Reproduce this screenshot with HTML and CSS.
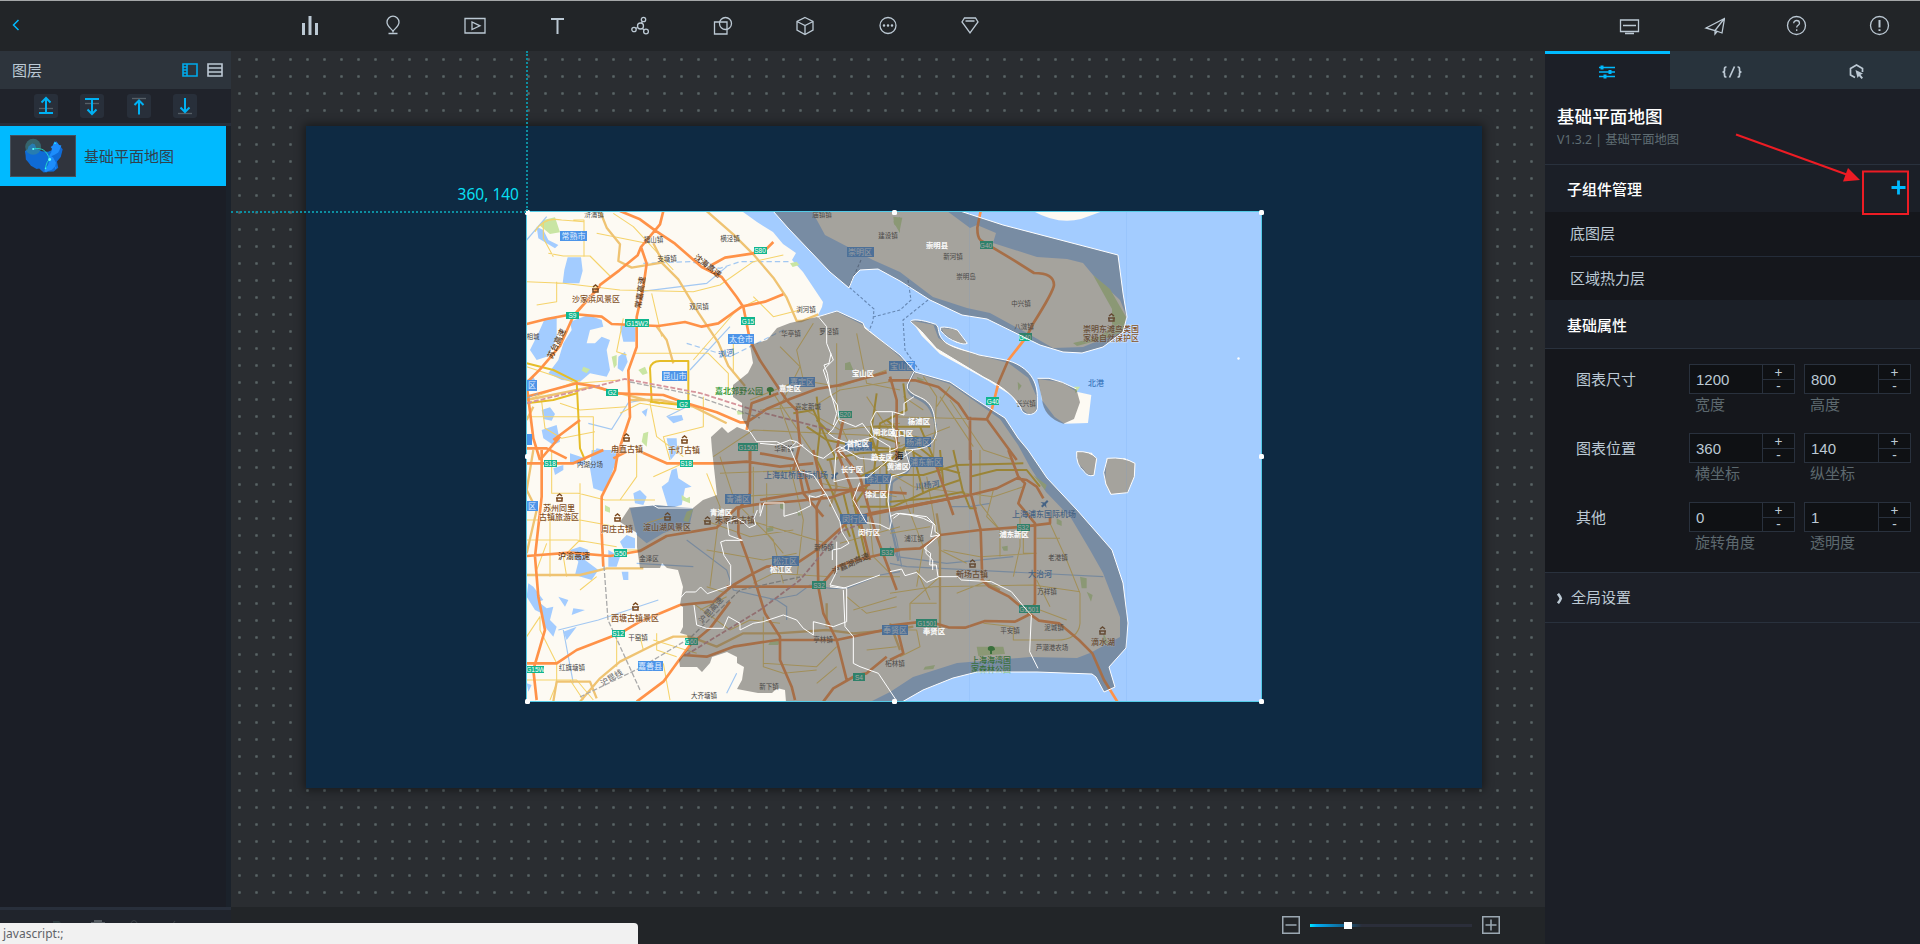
FILE: index.html
```html
<!DOCTYPE html>
<html lang="zh-CN">
<head>
<meta charset="utf-8">
<title>基础平面地图</title>
<link rel="stylesheet" href="styles.css">
</head>
<body>
<div class="app">
<header class="topbar">
  <div class="back"><svg width="8" height="12" viewBox="0 0 8 12"><path d="M6.500 1 1.500 6l5 5"/></svg></div>
  <nav class="tools">
    <span><svg viewBox="0 0 24 24"><path class="thick" d="M5.500 10v12M12 3v19M18.500 10v12"/></svg></span>
    <span><svg viewBox="0 0 24 24"><path d="M12 18.500c-1-2.500-6-5-6-9.300a6 6 0 0 1 12 0c0 4.300-5 6.800-6 9.300zM7.500 20.500h9"/></svg></span>
    <span><svg viewBox="0 0 24 24"><path d="M2 5.500h20v14.500H2zM9 9v7.500l8-3.700z"/></svg></span>
    <span><svg viewBox="0 0 24 24"><path class="thick2" d="M5 6h13M11.500 5v16"/></svg></span>
    <span><svg viewBox="0 0 24 24"><circle cx="12.500" cy="13" r="3"/><circle cx="15.500" cy="6.500" r="2.200"/><circle cx="6" cy="16.500" r="2.200"/><circle cx="18" cy="18.500" r="2.400"/><path d="m13.500 10 1-1.500M9.500 14.500l-1.500.8M14.500 15.500l1.500 1.500"/></svg></span>
    <span><svg viewBox="0 0 24 24"><path d="M3.500 9H16v12H3.500z"/><circle cx="14.500" cy="10.500" r="6"/></svg></span>
    <span><svg viewBox="0 0 24 24"><path d="m12 4.500 8 4V17l-8 4.500L4 17V8.500zM4 8.500l8 4 8-4M12 12.500v9"/></svg></span>
    <span><svg viewBox="0 0 24 24"><circle cx="12" cy="12.500" r="8"/><path class="dots" d="M8 12.500h.01M12 12.500h.01M16 12.500h.01"/></svg></span>
    <span><svg viewBox="0 0 24 24"><path d="M6.500 5h11l2.500 4-8 11L4 9zM7.500 8h9"/></svg></span>
  </nav>
  <nav class="sys">
    <span><svg viewBox="0 0 24 24"><path d="M2.500 7h18v11.500h-18zM5 12.500h13M7 20.500h9"/></svg></span>
    <span><svg viewBox="0 0 24 24"><path d="M5 15 23.500 5.500 21 20l-7-2.500zM23 6l-9 11.500V21l2.500-3"/></svg></span>
    <span><svg viewBox="0 0 24 24"><circle cx="12.500" cy="12.500" r="9"/><path d="M9.700 10.200c0-3.700 5.800-3.500 5.800 0 0 2.200-2.800 2-2.800 4.300M12.700 16.300v1.700"/></svg></span>
    <span><svg viewBox="0 0 24 24"><circle cx="12.500" cy="12.500" r="9"/><path class="thick2" d="M12.500 7v7.500M12.500 16.200v1.700"/></svg></span>
  </nav>
</header>

<div class="body">
<aside class="layers">
  <div class="lhead"><b>图层</b>
    <svg class="on" width="16" height="14" viewBox="0 0 16 14"><path d="M1 1h14v12H1zM5 1v12M1 4h4M1 7h4M1 10h4"/></svg>
    <svg width="16" height="14" viewBox="0 0 16 14"><path d="M1 1h14v12H1zM1 5h14M1 9h14"/></svg>
  </div>
  <div class="ltools">
    <i><svg viewBox="0 0 24 24"><path class="dim" d="M5 14.500h14"/><path d="M12 4.500V19M7.500 8.500 12 4l4.500 4.500M5 19h14"/></svg></i>
    <i><svg viewBox="0 0 24 24"><path class="dim" d="M5 9.500h14"/><path d="M12 5v15M7.500 15.500 12 20l4.500-4.500M5 5h14"/></svg></i>
    <i><svg viewBox="0 0 24 24"><path class="dim" d="M5 4.500h14"/><path d="M12 20.500V6M7.500 11 12 6.500l4.500 4.500"/></svg></i>
    <i><svg viewBox="0 0 24 24"><path class="dim" d="M5 19.500h14"/><path d="M12 4v14M7.500 13.500 12 18l4.500-4.500"/></svg></i>
  </div>
  <div class="llist">
    <div class="item">
      <svg class="thumb" viewBox="15 15 198 126"><path fill="#0f6bd6" d="m57 62 9-5 2-9 12-9 8 2 6 14 16 8 20 2 14-6 6-12 6-4-2-14 6 8 16 20-6 24-12 14 4 20-14 12-18 1-14 2-14-13-8 2-18-10-9-12-7-8-1-14z"/><path fill="#1d8dfb" d="m144 46 6-14 9 4 5 7 8 2-6 14-4 8-10 6-12 6 6 4 9 16-3 12-10 10-14 5-4 2-6-1 2-7 10-14 4-12-2-14 8-14 2-12-4-4zM120 128l5-3v5zM153 112l3-1-1 8-3-2z"/><circle cx="83" cy="49" r="25" fill="#3d8c93" opacity=".55"/><path fill="none" stroke="#25d8c8" stroke-width="3" d="M83 56c28-6 44 6 52 33q-10 6-13 27"/><circle cx="135" cy="89" r="4.500" fill="#6ff"/><circle cx="83" cy="56" r="3" fill="#6ff"/><circle cx="122" cy="117" r="2.500" fill="#3fe"/><circle cx="152" cy="38" r="2.500" fill="#3fe"/></svg>
      <span>基础平面地图</span>
    </div>
  </div>
  <div class="lfoot"><svg width="140" height="8" viewBox="0 0 140 8"><path class="f1" d="M0 3h6l2 2h5v3H0z"/><path class="f2" d="M38 4h3V2h8v2h3v4H38z"/><path class="f3" d="M78 8V5q3-5 6 0v3M122 3l-4 5"/></svg></div>
</aside>

<main class="stage">
  <div class="canvas">
    <div class="board">
      <span class="coord">360, 140</span>
      <svg class="map" viewBox="526 211 736 490.500">
        <rect x="526" y="211" width="736" height="491" fill="#fdfaf3"/>
        <g class="sea">
          <path d="M741.700 211 757 222 773 232 783 244 796 253 792 260 803 272 813 287 823 302 822 307 817 317 837 312 863 325 900 357 915 373 950 384 973 400 1000 419 1018 445 1030 467 1046 492 1071 518 1090 550 1103 573 1120 617 1120 637 1090 653 1077 658 1030 657 957 663 913 677 890 692 870 702H1262V211z"/>
          <g transform="translate(520 200) scale(.33333)"><path d="m50 80 20 10 15 30 30 15-10 10-50-30zM143 172l40 0 5 40-10 38-50 0 5-40zM75 355l35-5 0 65-15 30-15 25-30 10-20-30 25-50zM150 365l55-20 40 15 5 20-40 10-10 40 25 0 20-20 25 10-10 30 10 60-10 20-50-10-30 25-55-5-40-20 30-40 15-50 25-40zM300 380l25-15 22 20-2 40-35 0zM295 470l20-15 8 30-15 30-15-10zM65 630l25-8 15 20-10 20-25-5zM65 690l45-15 10 50-20 10-30-20zM20 540l20-10 10 20-30 20zM365 635l18-10-5 25zM440 650l45-5 5 15-30 10zM440 715l30 0 2 40-20 25zM230 745l50 10-10 25h-60z"/></g>
          <g transform="translate(520 450) scale(.33333)"><path d="m215 0 90 0-15 30-20 55-20 40-30-10-10-60zM150 10l45 15 0 20-45-5zM100 55l30-10 0 15-25 15zM425 110l20-15 10-35 15-5 5 30 40 25-20 5-10 50-40 10zM340 130l20-10 20 20-10 25-25-5zM330 175l70-10 120 10-10 45-80 30-50 30-30-25zM300 275l20-20 25 10 0 30-35 0zM150 300l30-10 25 10-10 30 40 30-20 30-50-15 10-40zM265 300l35 20-10 30-25 0zM305 365l20 0 0 25-15 0zM25 400l15 10 30 40-15 5 25 20 20-5-10 40 20 20-10 30-25-30-10-40-20-10-25-40zM115 440l30 10-10 20zM160 475l35 5-40 15zM130 545l40-15-30 40zM20 700l15 5-10 20z"/></g>
        </g>
        <path class="land" d="M812 211 825 235 873 260 900 272 933 297 967 308 990 313 1027 333 1053 348 1083 347 1107 337 1123 330 1127 317 1120 300 1093 275 1083 263 1067 259 1037 257 993 243 996 233 977 225 970 228 947 211zM1033 211q25 14 48 8l22-8z"/>
        <g class="land" transform="translate(890 200) scale(.33333)"><path d="m65 362 65 12 15 40 30 18 90 33 90 24 60 45 24 55-2 48-22 5-30-25-20-30-70-45-90-50-55-30-55-55zM155 384l45 5 30 42-30-3-40-30zM445 537l70 10 45 28 44 10-10 84-70 2-30-20-38-50z"/></g>
        <g class="land" transform="translate(890 450) scale(.33333)"><path d="m560 5 45 3 15 20-8 48-20-5-28-33zM650 25l55 0 30 15-2 40-22 48-50 5-16-35z"/></g>
        <g class="park">
          <path d="M1093 275l17 14 16 28-3 14-16 7-30 8-4-3 25-6 14-10 0-18z"/>
          <g transform="translate(520 200) scale(.33333)"><path d="m70 60 35-8 15 45-30 5-30-25zM810 190l20-5 8 10-20 6zM275 470l15-5 0 30-8 10zM190 500l20 8-10 12-15-8zM355 510l20-10 8 20-15 5zM650 632l18 0 5 10-20 2zM975 490l15-5 10 25-25 0zM1120 65l20-15v50zM370 700l15-5-5 45-15-15z"/></g>
          <g transform="translate(520 450) scale(.33333)"><path d="m485 135 15 10 10-5 0 20-25-10zM500 185l20-8-15 40-15-5zM255 165l15 8 0 15-15-5zM740 235l20-8 0 15-18 5zM780 160l15 0-3 20-12-5zM750 575l30-5-5 15-30 0zM830 180l15 15-10 3z"/></g>
          <g transform="translate(890 200) scale(.33333)"><path d="m10 50 27 3-7 35-18-15zM383 545l12 12-10 15zM80 530l25 10-20 5zM570 560h-18l5 20z"/></g>
          <g transform="translate(890 450) scale(.33333)"><path d="m570 380 20 5 0 30-15 0zM590 425l18 10-5 20zM640 548l15 30-15 5zM500 205l15 8 0 15-15-6zM260 590l80 0 5 22-80 6zM105 650l30-5-5 12-30 2zM430 75l40 30-5 15zM335 290l18-3 0 15-12 0z"/></g>
        </g>

        <g class="river">
          <g transform="translate(520 200) scale(.33333)"><path d="m20 120 60-70M205 670l70 18 50-80 50-10M500 620l-60 30M630 380l-120 130M620 200l-60 50-200 25" /><path class="dash" d="m370 190 140-5 90 20 60-20 150 0M500 430l130 40 160-80"/></g>
          <g transform="translate(520 450) scale(.33333)"><path d="m115 540 120-30 180-60M130 540l30 160M350 340l170 10M500 270l120 90 20 60 130 30 30 20 0 40M650 670l-30 60M750 450l80-15 40-30 60 10 50 0 100-40 60-10" /></g>
          <g transform="translate(890 450) scale(.33333)"><path d="m0 200 20 70 15 80M0 340l50 10 590 30M20 320l150 20 200-20M180 170l60 0 60-10"/><path d="m0 290 20 30" /></g>
          <g transform="translate(760 360) scale(.33333)"><path stroke-width="7" d="M462 35c-15 30-30 55-5 72 40 18 60 30 70 90 5 40-20 60-80 68-20 10 5 30 2 58-10 30-50 30-54 48 0 40-10 70-4 112 5 40 15 60 24 120"/></g>
        </g>
        <g class="y">
          <g transform="translate(520 200) scale(.33333)"><path d="M160 60h32v110M45 95q25-45 80-35l67 5M85 160l45 8h80l60 60M70 65v50l30 55M20 245l110 5 170 20 220 5 80-20 100-70 90-20M110 245v60l-60 10M280 40l60 40 120 130M395 280l30 130M230 100l150 30M345 460h220l60 60v60M310 355l-20 100 30 10M20 500l150 50 130-10M20 600l160-60M120 610l60 20 140-10M20 650h200v110M65 605l10 80 50 30 100-20M300 640l60-30 120 20M390 610l20 100 80 60M550 590v90l-120 30 20 70M640 420v100M520 480l130-150 60-30 50 50 80-20M700 290l60 60M690 600l150-60 120 20 140-50M720 630l120-10 120 70 180-20M780 440l60 60-60 120 40 110M880 370l-50 80 20 90M950 430v200M1010 400l30 150 100 20M880 620l80-50 180-30M580 770l120-80 440 20M760 580l120 180M950 650l60 130M1040 590l100 150"/></g>
          <g transform="translate(520 450) scale(.33333)"><path d="M95 0v130h80l80 20h150M20 210h160l110 20M180 100v170l-50 50 10 60M20 270h150l120 20M90 160v220M350 0v80l-50 70M400 80l90-40M440 200l-60 20M280 300h80M80 280l-30 80M230 380l-50 40M20 560l40-60 0 40 50 100M290 540v110M360 560l10 40M400 570l130 40M20 690h150l50 60M110 640v60l-20 50M150 690l40 60M410 550v50l60 20M430 640l20 110M600 20l40 120 200-10M560 70l40 100-30 240M550 210l140 50 130-20M560 300l170 30 100-20M660 170l100 100 30 130M740 100v150l50 60M810 50l40 160-20 180M560 410l60 20M540 480l80-40M520 460l110 80 60-30 90 10M730 500v150l60 20 100-10M650 200l270 80M700 50v140M600 70l250-10M730 640l160 10 60-60M890 700l60-50M700 400l60-30 170 10M960 380h180M980 440l60 50 90-20M1000 480l130-40M1040 600l90-10M960 280l180-50M900 100l230 40M1030 20l30 300 60 60M1080 50v190"/></g>
          <g transform="translate(890 200) scale(.33333)"><path d="m0 650 240 6M100 530l40 60-10 190M150 590l100 150M180 600l100 150 90 30M40 590l60 40M20 700l120 20M0 750l180-70M180 560l-40 60"/></g>
          <g transform="translate(890 450) scale(.33333)"><path d="M0 70l70 40 240 30 90-30M70 0v190M30 110l70 180-20 120M110 80l40 220 80 40M0 250l120-20M160 300l110 20 170-10M270 0v160l60 80v80M310 120l-20 80 40 40M480 220l50 110 40 100v90q-5 50-70 50H370v-40l-90-10M440 265l70 0M400 240v70h40M390 200v90l-20 90M0 430l130-20 300-5 140 20M150 380l-90 80v50M60 460h80M0 540h80l10 50-60 30M80 360l40 90M300 390l-100 40M440 390l40 80M450 480l80 30"/></g>
        </g>
        <g class="amber">
          <g transform="translate(520 200) scale(.33333)"><path d="m240 33 20 50 40 50-5 50 40 20 90-15 50 50 60 100 60 90 30 70 50 60M560 33l80 70 60 60 60 70 40 60 30 70 15 0 50-20M410 380l30 40 20 70M20 600l200-40 200 50M330 600h90l100 20 100 50M400 130l30 60M20 660l20-40"/></g>
          <g transform="translate(520 450) scale(.33333)"><path d="m20 375h160l80-20h110M40 0l-20 120 30 60-30 130M100 755l10-60h100l20 50M180 755l60-70 60-50 100-50 60-25h50l80 30 80-40h100l150-10 80 10 120-10 60-10M930 30l20 80-20 60M920 460v70"/></g>
          <g transform="translate(890 450) scale(.33333)"><path d="M150 250v300M150 250l-10-60M0 520l30 80M270 390l60 30"/></g>
        </g>
        <g class="gold">
          <g transform="translate(520 200) scale(.33333)"><path d="M20 490l80 20 70 35 10 200 15 35M395 605l-5-100q5-22 30-22h85v130M20 610l80-10 70-20M390 605l95 10M820 640l60-10 50 110 20 40M890 660l40 40M1080 780l-30-80 90 30"/></g>
          <g transform="translate(760 360) scale(.33333)"><path d="m170 110 10 100-10 90 40 80 60 150M140 200l60 40 100 20 150 10 80 50 70 20M430 70l10 80-80 40-20 160-60 90M350 100l-20 140 50 80 0 120M380 180l70 60 100 80M300 350l80-40 90-80M300 440l100 0 110-50 90-30M200 300l100-20 150-10M330 200h180M460 280l30 120M480 200l60 140M250 400l50 200M270 380l50 220"/></g>
          <g transform="translate(890 450) scale(.33333)"><path d="M0 155l120-10 100-20 20 50 20 0M0 75h100l100-30 200-5M190 0l30 130M240 80l80-20h90l40 50M150 0l10 100"/></g>
        </g>
        <g class="o">
          <g transform="translate(520 200) scale(.33333)"><path d="m300 33 60 25 45 33-42 50-10 25-55 45-60 45M430 33l-10 40-15 18 60 40 80 70 60 30 45 60 20 30 20 100 30 60 80 120 30 30 10 100-20 80M363 141l17 50-10 70-20 90 0 90-25 70 5 140-40 120M20 372l60-15 80-15 85 8 30 22 140 6 80-12 50 14 50-10 70-50 70-15 55-22M240 258l-80 90-40 90-60 70-35 35M575 195l40-22 80-12 40-10 25-25M20 590l150-40 60 10 60 20 140 5 60 22 100 30 70 30 20 0 60-40 70-30 80-30 60-10 150-40M680 690l15-80 80-30M690 730v50M20 555l20 160 20 65M100 720l80-60M20 745h60l60 30M280 775l40-20M60 780l60-70"/></g>
          <g transform="translate(520 450) scale(.33333)"><path d="M65 0v140l-20 180 10 120 20 100-35 120 10 90M295 0l-10 60-40 80 0 110 5 100M20 40h140l90-40M350 0l90 40h160l80-5 100 15 100-10M20 318l130-10 120 10 90-15 80-45 150-25 60-60 60-10 120-10 100-10 120-40M690 0l0 130-35 50 0 70 40 110 40 130 45 70 0 70 35 80 10 40M880 0l30 130-20 40 5 240 15 80 40 80 30 120M20 640h90l60-40 130-50 60-35 120-50 100-10 60-50 60-35 40-20 90-10 60-40 100-90 60-20 190-35M350 755l80-60 80-110 60-50 60-80M490 615l70 5 80-30 130-20 180 0 190-40M620 410h280l50-60 60-20 130-30M850 60l20 70M960 0l60 80 50 180 60 160M910 755l30-40 70-40 30-5 60-50"/></g>
          <g transform="translate(760 360) scale(.33333)"><path d="M0 280l110 20M0 420l180-30 110 0 150 10M250 180l-20 90 50 130 50 200M110 300l20 100 60 70M600 410l-300 60"/></g>
          <g transform="translate(890 200) scale(.33333)"><path d="M272 33l-10 50q0 30 10 38l100 60 60 38q60 0 60 36-2 20-62 115l-20 40-55 70-30 70-20 80-15 28-55-2-30-45-60-50-70-20-80 0M240 650v130M290 657l90 123M20 780v-180l-20-70"/></g>
          <g transform="translate(890 450) scale(.33333)"><path d="m0 180 130-25 110-20 80-20 60-30 30 5 30 20 20 35M242 0v130l30 110 5 150 20 20 60 30 60 50 30 22 60 8 60 50 40 40 35 80 40 65M0 300l90-5 60-40 120-15 130-10 80-10v-20M355 0l30 80 20 20-20 60 50 60v240l-20 35-40 20-90-2-60 20-50-1-50-15H80l-80 10M140 50l50 145M20 530l20 80-40 20"/></g>
        </g>
        <g class="rail"><path class="pink" d="M527 403 590 388 625 379 700 393 760 412 830 430M686 655 760 610 800 580 840 532 870 520"/><path d="M527 398 540 393M630 382 690 394 760 418M604 566 608 620 640 690M580 697 640 668 690 638 740 590 800 577"/></g>
        <g class="ferry"><path d="m861 260-12 27 25 22-1 12-4 10M873 317l27-7 11-10-3-20M928 300l-25 20 2 30 14 20"/></g>

        <g class="town">
          <text x="594" y="217">浒浦镇</text><text x="653.500" y="242">福山镇</text><text x="667" y="261">支塘镇</text><text x="730" y="241">横泾镇</text><text x="699" y="309">双凤镇</text><text x="806" y="312">浏河镇</text><text x="822" y="217">庙镇镇</text><text x="888" y="238">建设镇</text><text x="791" y="336">华亭镇</text><text x="829" y="334">罗泾镇</text><text x="808" y="409">嘉定新城</text><text x="533" y="339">相城</text><text x="953" y="259">新河镇</text><text x="966" y="279">崇明岛</text><text x="1021" y="306">中兴镇</text><text x="1024" y="329">八滧镇</text><text x="1026" y="406">长兴镇</text><text x="590" y="467">内湖分场</text><text x="649" y="561">金泽区</text><text x="572" y="670">红旗塘镇</text><text x="638" y="640">干窑镇</text><text x="704" y="698">大齐塘镇</text><text x="769" y="689">新下镇</text><text x="823" y="642">亭林镇</text><text x="824" y="550">新桥镇</text><text x="914" y="541">浦江镇</text><text x="895" y="666">柘林镇</text><text x="1058" y="560">老港镇</text><text x="1047" y="594">万祥镇</text><text x="1054" y="630">泥城镇</text><text x="1010" y="633">平安镇</text><text x="1052" y="650">芦潮港农场</text><text x="784" y="451">华新镇</text>
          <g class="bigger"><text transform="translate(643 293) rotate(-82)">常嘉高速</text><text transform="translate(706 268) rotate(38)">沈海高速</text><text transform="translate(559 345) rotate(-65)">苏台高速</text><text x="574" y="559">沪渝高速</text><text class="gr" transform="translate(713 612) rotate(-48)">沪昆高速</text><text transform="translate(852 566) rotate(-25)">沪嘉湖高速</text><text class="gr" transform="translate(613 680) rotate(-32)">沪昆线</text></g>
        </g>
        <g class="scenic">
          <text x="596" y="302">沙家浜风景区</text><text x="627" y="452">甪直古镇</text><text x="684" y="453">千灯古镇</text><text x="559" y="511">苏州同里</text><text x="559" y="520">古镇旅游区</text><text x="617" y="532">周庄古镇</text><text x="667" y="530">淀山湖风景区</text><text x="735" y="523">朱家角古镇</text><text x="635" y="621">西塘古镇景区</text><text x="972" y="577">新场古镇</text><text x="1103" y="645">滴水湖</text><text x="1111" y="332">崇明东滩鸟类国</text><text x="1111" y="341">家级自然保护区</text>
          <path class="pins" d="M592 289h7M593 287l2.500-2 2.500 2M593 289v3h5v-3M623 438h7M624 436l2.500-2 2.500 2M624 438v3h5v-3M681 440h7M682 438l2.500-2 2.500 2M682 440v3h5v-3M556 498h7M557 496l2.500-2 2.500 2M557 498v3h5v-3M614 518h7M615 516l2.500-2 2.500 2M615 518v3h5v-3M664 517h7M665 515l2.500-2 2.500 2M665 517v3h5v-3M704 521h7M705 519l2.500-2 2.500 2M705 521v3h5v-3M632 607h7M633 605l2.500-2 2.500 2M633 607v3h5v-3M969 564h7M970 562l2.500-2 2.500 2M970 564v3h5v-3M1099 631h7M1100 629l2.500-2 2.500 2M1100 631v3h5v-3M1108 318h7M1109 316l2.500-2 2.500 2M1109 318v3h5v-3"/>
        </g>
        <g class="grn"><text x="739" y="394">嘉北郊野公园</text><text x="991" y="663">上海海湾国</text><text x="991" y="672">家森林公园</text><path d="M767 391q-1-4 3-4t4 4l-3 1v3h-2v-3zM988 650q-1-4 3-4t4 4l-3 1v3h-2v-3z"/></g>
        <g class="wtr"><text x="796" y="478">上海虹桥国际机场</text><text x="1044" y="517">上海浦东国际机场</text><text x="727" y="356" transform="rotate(-10 727 356)">浏河</text><text x="1096" y="386">北港</text><text x="928" y="488" transform="rotate(-8 928 488)">川杨河</text><text x="1040" y="577">大治河</text><path d="m1047 500-2.500 2.500-4-.500 2.500 2-2 2 1.500 1.500 2-2 2 2.500-.5-4 2.500-2.500zM837 472l-2.500 2.500-4-.500 2.500 2-2 2 1.500 1.500 2-2 2 2.500-.5-4 2.500-2.500z"/></g>
        <g class="city"><rect x="560" y="231" width="27" height="10"/><text x="573.500" y="239">常熟市</text><rect x="728" y="334" width="26" height="10"/><text x="741" y="342">太仓市</text><rect x="662" y="371" width="25" height="10"/><text x="674.500" y="379">昆山市</text><rect x="527" y="380" width="10" height="11"/><text x="532" y="388">区</text><rect x="527" y="434" width="5" height="11"/><rect x="527" y="501" width="11" height="10"/><text x="532" y="509">区</text><rect x="638" y="661" width="25" height="10"/><text x="650" y="669">嘉善县</text><rect x="847" y="247" width="27" height="10"/><text x="860" y="255">崇明区</text><rect x="789" y="377" width="26" height="10"/><text x="802" y="385">嘉定区</text><rect x="889" y="361" width="26" height="10"/><text x="902" y="369">宝山区</text><rect x="725" y="494" width="26" height="10"/><text x="738" y="502">青浦区</text><rect x="772" y="556" width="27" height="10"/><text x="785" y="564">松江区</text><rect x="840" y="514" width="27" height="10"/><text x="854" y="522">闵行区</text><rect x="882" y="625" width="26" height="10"/><text x="895" y="633">奉贤区</text><rect x="910" y="457" width="33" height="10"/><text x="926" y="465">浦东新区</text><rect x="845" y="442" width="27" height="9"/><text x="859" y="450">普陀区</text><rect x="865" y="474" width="26" height="10"/><text x="878" y="482">徐汇区</text><rect x="905" y="437" width="26" height="10"/><text x="918" y="445">杨浦区</text></g>
        <g class="shield"><rect x="566" y="312" width="13" height="7"/><text x="572.500" y="318">S9</text><rect x="625" y="319" width="24" height="8"/><text x="637" y="325.500">G15W2</text><rect x="754" y="247" width="13" height="7"/><text x="760" y="253">S80</text><rect x="741" y="317" width="14" height="8"/><text x="748" y="323.500">G15</text><rect x="606" y="389" width="12" height="7"/><text x="612" y="395">G2</text><rect x="677" y="400" width="13" height="8"/><text x="683.500" y="406.500">G2</text><rect x="738" y="443" width="20" height="8"/><text x="748" y="449.500">G1501</text><rect x="838" y="411" width="14" height="7"/><text x="845" y="417">S20</text><rect x="544" y="460" width="13" height="7"/><text x="550" y="466">S18</text><rect x="680" y="460" width="13" height="7"/><text x="686" y="466">S18</text><rect x="614" y="549" width="13" height="8"/><text x="620" y="555.500">G50</text><rect x="612" y="630" width="13" height="7"/><text x="618" y="636">S12</text><rect x="527" y="666" width="17" height="7"/><text x="535.500" y="672">G15W</text><rect x="685" y="638" width="13" height="7"/><text x="691" y="644">G60</text><rect x="812" y="581" width="14" height="8"/><text x="819" y="587.500">S32</text><rect x="880" y="548" width="14" height="8"/><text x="887" y="554.500">S32</text><rect x="853" y="673" width="12" height="8"/><text x="859" y="679.500">S4</text><rect x="980" y="241" width="13" height="8"/><text x="986" y="247.500">G40</text><rect x="1019" y="333" width="13" height="8"/><text x="1025" y="339.500">G40</text><rect x="986" y="397" width="13" height="8"/><text x="993" y="403.500">G40</text><rect x="1017" y="524" width="13" height="7"/><text x="1023" y="530">S32</text><rect x="1019" y="605" width="21" height="8"/><text x="1029" y="611.500">G1501</text><rect x="916" y="619" width="21" height="8"/><text x="927" y="625.500">G1501</text></g>

        <g class="shade">
          <path d="M773 211 788 228 830 272 849 288 854 276 860 270 878 269 900 281 930 300 962 315 987 319 1040 345 1063 352 1082 353 1103 347 1123 332 1127 317 1123 293 1118 255 1003 225 960 211z"/>
          <path d="M817 317 837 311 863 323 865 328 900 355 915 372 950 382 972 397 1005 418 1018 438 1028 450 1047 478 1077 510 1112 550 1123 583 1128 623 1126 648 1109 667 1115 687 1104 692 1096 677 1092 674 1037 672 977 672 953 678 923 690 902 702H786L785 690 777 688 772 693 758 693 737 689 742 680 744 667 737 663 737 657 727 652 712 657 710 663 702 672 697 667 680 667 679 660 690 647 687 635 680 633 683 627 683 607 680 605 683 587 678 570 667 568 662 563 660 568 640 568 637 547 637 533 620 522 630 507 653 505 693 508 703 500 717 495 712 450 711 437 722 427 728 433 737 427 750 432 742 418 742 403 733 397 733 385 748 373 753 363 750 345 767 340 777 328 790 323z"/>
          <g transform="translate(890 200) scale(.33333)"><path d="M62 365c0-8 30-8 75 8 15 10 0 30 30 55 30 20 70 25 100 37l80 15c60 15 95 55 95 110v35c-5 25-45 25-50-3-25-40-60-65-110-90L140 446 95 395zM152 382q20-3 50 8l30 40q-10 5-30-3-30-10-50-35zM442 535h35l40 12 42 20 11 40-18 50-32 14q-60-20-64-75z"/></g>
          <g transform="translate(890 450) scale(.33333)"><path d="M560 5q40-3 60 20l-8 51q-20 5-30-12-25-20-22-59zM652 25q50-5 83 15l-2 40-20 48-50 5q-20-30-22-65z"/></g>
        </g>
        <g class="border">
          <path d="M773 211 788 228 830 272 849 288 854 276 860 270 878 269 900 281 930 300 962 315 987 319 1040 345 1063 352 1082 353 1103 347 1123 332 1127 317 1123 293 1118 255 1003 225 960 211M817 317 837 311 863 323 865 328 900 355 915 372 950 382 972 397 1005 418 1018 438 1028 450 1047 478 1077 510 1112 550 1123 583 1128 623 1126 648 1109 667 1115 687 1104 692 1096 677 1092 674 1037 672 977 672 953 678 923 690 902 702M630 507 653 505 658 508 693 508"/>
          <g transform="translate(760 360) scale(.33333)"><path d="m213-20-6 30-15 5 10 25 10 65 20 30 5 40-20 35-12 10 20 15 40 15 0 20-30 5 20 20M237 180l50 20 20-10 30 40M340 215l-8-30 15-30h50v45l10 30 5 35-25 10M397 155l35 10V130l30-20M462 35l-20 40q-5 20 40 38c45 20 40 60 48 105-10 45-45 50-95 52l15 48q0 20-55 30l-8 40-3 35 10 60-5 25-30-15-40-5-40-70 20-50M0 250l50 5 40-15 20 5 50 40 30 10 40-30 10-5 60 35 110 10 50-35M110 245l-20 20 30 70 40 10 40 60 40 80 5 30 22 35-25 15-25 5v30M228 280l-6 85 40-10 60-2 60-50M230 275l30-20 80-25 50 30 0 40M197 402l-30 10-20-5 5 30-40 20-40 12v-40l-60 0-12 40M0 430v30M400 475l20-15 80 10 25 25 0 20 15 10-42 35 0 20 20 20v30"/></g>
          <g transform="translate(520 200) scale(.33333)"><path d="m895 350 25 30 0 50 20 50-30 30 20 60 20 70-10 35M690 695l20 30 60 0 40 20 40-10"/></g>
          <g transform="translate(520 450) scale(.33333)"><path d="m712 180-10 25 5 20-20 8-15-15-20-12-30 10 5 40 40 15-50 0-15 5 10 40 20 30v60l-70 25-20-20-15 15h-30l-15 17M522 465l8 60 30 10 50 0 15-35 35 20 0 20 40-20 30-5 60-20 40 15 20 25 30 20v-40l60 15 40-15v-100l-50-10 20-40v-90M970 420l5 110 25 30v80l20 10 55 20 60 90M930 410l40 5 110-40"/></g>
          <g transform="translate(890 450) scale(.33333)"><path d="M0 200l20-10 40 5 40 10 30 15-8 40 25-5-45 40 20 15-3 35 20 0 5 35h60l10 10 90 5 60 30 50 60 10 10-5 110 25 50M0 365l35-8 10 20 35-10 30 30 35-15M560 5q40-3 60 20l-8 51q-20 5-30-12-25-20-22-59zM652 25q50-5 83 15l-2 40-20 48-50 5q-20-30-22-65z"/></g>
          <g transform="translate(890 200) scale(.33333)"><path d="M62 365c0-8 30-8 75 8 15 10 0 30 30 55 30 20 70 25 100 37l80 15c60 15 95 55 95 110v35c-5 25-45 25-50-3-25-40-60-65-110-90L140 446 95 395zM152 382q20-3 50 8l30 40q-10 5-30-3-30-10-50-35zM442 535h35l40 12 42 20"/></g>
        </g>
        <g class="white"><text x="937" y="248">崇明县</text><text x="790" y="391">嘉定区</text><text x="863" y="376">宝山区</text><text x="919" y="424">杨浦区</text><text x="884" y="435">闸北区</text><text x="902" y="436">虹口区</text><text x="858" y="446">普陀区</text><text x="882" y="460">静安区</text><text x="898" y="469">黄浦区</text><text x="852" y="472">长宁区</text><text x="876" y="497">徐汇区</text><text x="721" y="515">青浦区</text><text x="869" y="535">闵行区</text><text x="781" y="572">松江区</text><text x="1014" y="537">浦东新区</text><text x="934" y="634">奉贤区</text></g>
        <text class="hai" x="899" y="459">海</text>
        <circle cx="1238.500" cy="358.500" r="1.200" fill="#fff"/>
        <path class="tiles" d="M969.500 211v491M1126.500 211v491"/>
      </svg>
      <div class="handles"><u></u><u></u><u></u><u></u><u></u><u></u><u></u><u></u></div>
    </div>
    <div class="guide-h"></div><div class="guide-v"></div>
  </div>
  <footer class="zoombar">
    <svg width="18" height="18" viewBox="0 0 18 18"><path d="M.75.75h16.500v16.500H.75zM3.500 9h11"/></svg>
    <div class="track"><em></em></div>
    <svg width="18" height="18" viewBox="0 0 18 18"><path d="M.75.75h16.500v16.500H.75zM3.500 9h11M9 3.500v11"/></svg>
  </footer>
</main>

<aside class="props">
  <div class="tabs">
    <span class="active"><svg width="16" height="14" viewBox="0 0 16 14"><path d="M0 2.500h16M0 7h16M0 11.500h16" /><path class="knob" d="M3 .5v4M11 5v4M6 9.500v4"/></svg></span>
    <span><svg width="22" height="14" viewBox="0 0 22 14"><path d="M5.500 2H5Q3.500 2 3.500 4v1.500Q3.500 7 1.500 7q2 0 2 1.500V10q0 2 1.500 2h.5M16.500 2h.5q1.500 0 1.500 2v1.500q0 1.500 2 1.500-2 0-2 1.500V10q0 2-1.500 2h-.5M13.500 1.500 8.500 12.500"/></svg></span>
    <span><svg width="16" height="16" viewBox="0 0 16 16"><path d="M6 13.500 1.500 11V4.500L7.500 1l6 3.500V8"/><path class="fill" d="m6.500 6 7.500 3.500-2.500 1.200 2.500 3-1.500 1.300-2.500-3-1.500 2z"/></svg></span>
  </div>
  <div class="title"><h1>基础平面地图</h1><p>V1.3.2 | 基础平面地图</p></div>
  <div class="sec sub">子组件管理<svg width="15" height="15" viewBox="0 0 15 15"><path d="M7.500.5v14M.5 7.500h14"/></svg></div>
  <ul><li>底图层</li><li>区域热力层</li></ul>
  <div class="sec">基础属性</div>
  <div class="form">
    <div class="row"><label>图表尺寸</label>
      <div class="field"><div class="num"><span>1200</span><b>+</b><b>-</b></div><small>宽度</small></div>
      <div class="field"><div class="num"><span>800</span><b>+</b><b>-</b></div><small>高度</small></div></div>
    <div class="row"><label>图表位置</label>
      <div class="field"><div class="num"><span>360</span><b>+</b><b>-</b></div><small>横坐标</small></div>
      <div class="field"><div class="num"><span>140</span><b>+</b><b>-</b></div><small>纵坐标</small></div></div>
    <div class="row"><label>其他</label>
      <div class="field"><div class="num"><span>0</span><b>+</b><b>-</b></div><small>旋转角度</small></div>
      <div class="field"><div class="num"><span>1</span><b>+</b><b>-</b></div><small>透明度</small></div></div>
  </div>
  <div class="global"><svg width="6" height="11" viewBox="0 0 6 11"><path d="M1 .8Q3.200 3.500 3.800 5.500 3.200 7.500 1 10.200"/></svg>全局设置</div>
</aside>
</div>
<div class="status">javascript:;</div>
<svg class="note" width="180" height="90" viewBox="1735 130 180 90"><path class="ln" d="M1736 134.500 1848 175"/><path class="hd" d="m1860 180-12-12-5 13.500z"/><path class="ln" d="M1863 171.500h45v42.500h-45z"/></svg>
</div>
</body>
</html>
```
FILE: styles.css
```css
* { box-sizing: border-box; }
body { margin: 0; background: #222529; font-family: "Noto Sans", "Noto Sans CJK SC", sans-serif; color: #bcc9d4; overflow: hidden; }
svg { fill: none; stroke: #bcc9d4; stroke-width: 1.300; display: block; }
.app { width: 1920px; height: 944px; display: flex; flex-direction: column; position: relative; overflow: hidden; }
.topbar { height: 51px; flex: none; border-top: 1px solid #a5a7a8; background: #222528; display: flex; align-items: center; padding-bottom: 2px; }
.back { width: 269px; padding-left: 12px; }
.back svg { stroke: #00baff; stroke-width: 1.500; }
.tools, .sys { display: flex; }
.tools span { width: 82.500px; display: grid; place-items: center; }
.tools svg, .sys svg { width: 24px; height: 24px; }
.tools .thick { stroke-width: 3; }
.thick2 { stroke-width: 2; }
.dots { stroke-width: 2.500; stroke-linecap: round; }
.sys { margin-left: auto; }
.sys span { width: 83px; display: grid; place-items: center; }
.body { flex: 1; display: flex; min-height: 0; }

.layers { width: 231px; background: #1c2028; display: flex; flex-direction: column; }
.lhead { height: 38px; background: #2d343c; display: flex; align-items: center; gap: 9px; padding: 0 8px 1px 12px; }
.lhead b { font-weight: 400; font-size: 15px; flex: 1; line-height: 20px; }
.lhead svg { stroke-width: 1.600; }
.lhead .on { stroke: #00a9ea; }
.ltools { height: 37px; border-bottom: 3px solid #282e3a; display: flex; gap: 22.300px; padding: 5px 0 0 34px; background: #20232b; }
.ltools i { width: 24px; height: 24px; background: #282f3a; border-radius: 3px; }
.ltools svg { stroke: #00b1f3; stroke-width: 2; }
.ltools .dim { stroke: #576068; stroke-width: 1.300; }
.llist { flex: 1; border-right: 5px solid #1b222b; background: #1b1e26; }
.item { height: 60px; background: #00baff; display: flex; align-items: center; padding-left: 10px; gap: 8px; font-size: 15px; color: #30414d; }
.item span { margin-top: -2px; }
.thumb { width: 66px; height: 42px; background: #30343d; border: 1px solid #45505c; stroke: none; }
.lfoot { height: 37px; border-top: 3px solid #282f3b; background: #20242c; padding: 8px 0 0 53px; }
.lfoot svg { stroke: none; }
.f1 { fill: #2d3a3f; }
.f2 { fill: #565d63; }
.f3 { stroke: #3a4045; stroke-width: 1.200; }

.stage { flex: 1; display: flex; flex-direction: column; min-width: 0; }
.canvas { flex: 1; position: relative; padding: 75px 63px 119px 75px; background: radial-gradient(circle, #5a6466 0, #4b5456 1.300px, transparent 1.700px) 0 0 / 17px 17px, #2a2d31; }
.board { width: 1176px; height: 661.500px; background: #0e2a43; box-shadow: 0 0 9px 2px rgba(0, 0, 0, .45); position: relative; padding: 85px 0 0 220px; }
.coord { position: absolute; right: 963px; top: 57px; font-size: 15.500px; line-height: 22px; color: #08dff1; }
.map { width: 736px; height: 490.500px; stroke: none; outline: 1px solid #54cbe7; outline-offset: -1px; overflow: hidden; }
.handles { position: absolute; left: 218.500px; top: 83.500px; width: 739px; height: 494px; display: grid; grid-template-columns: 5px 1fr 5px; grid-template-rows: 5px 1fr 5px; place-items: center; }
.handles u { width: 5px; height: 5px; border-radius: 1.500px; background: #fff; }
.handles u:nth-child(5) { grid-column: 3; }
.guide-h { position: absolute; left: 0; top: 160px; width: 295px; border-top: 2px dotted #0d8ea1; }
.guide-v { position: absolute; left: 295px; top: 0; height: 160px; border-left: 2px dotted #0d8ea1; }

.zoombar { height: 37px; background: #222528; display: flex; align-items: center; padding: 0 0 1px 1051px; gap: 10px; }
.zoombar svg { stroke: #9ba8b2; stroke-width: 1.500; }
.track { width: 162px; height: 3px; background: linear-gradient(90deg, #00eaff 0, #00aef5 4%, #126795 20%, #2b2e3a 32%); display: flex; align-items: center; }
.track em { width: 8px; height: 7px; background: #fff; margin-left: 34px; }

.map text { text-anchor: middle; font-family: "Noto Sans CJK SC", sans-serif; font-size: 6.500px; }
.sea { fill: #a3ccff; }
.land { fill: #fdfaf3; }
.park { fill: #c9e5a3; }
.river { fill: none; stroke: #a3c8f2; stroke-width: 3.500; }
.dash { stroke-dasharray: 16 9; }
.y { fill: none; stroke: #f5d36b; stroke-width: 3.200; stroke-linejoin: round; }
.amber { fill: none; stroke: #efc372; stroke-width: 7; stroke-linejoin: round; }
.gold { fill: none; stroke: #e6bd27; stroke-width: 6; stroke-linejoin: round; }
.o { fill: none; stroke: #ff9248; stroke-width: 8; stroke-linejoin: round; }
.rail { fill: none; stroke: #aaa; stroke-width: 1.300; stroke-dasharray: 5 2; }
.rail .pink { stroke: #d6949b; stroke-width: 1.800; }
.ferry { fill: none; stroke: #6587b3; stroke-width: 1.100; stroke-dasharray: 3 2; }
.town { fill: #444; }
.map .town .bigger text { font-size: 8px; fill: #5c3a1c; font-weight: 500; }
.map .town .bigger .gr { fill: #777; }
.map .hai { font-size: 9px; fill: #222; font-weight: 500; }
.map .scenic text, .map .grn text, .map .wtr text { font-size: 8px; font-weight: 500; }
.scenic { fill: #824f25; stroke: #fff; stroke-width: 1.200; paint-order: stroke; stroke-opacity: .5; }
.scenic .pins { fill: none; stroke: #7b4a20; stroke-opacity: 1; stroke-width: 1.500; }
.grn { fill: #25932f; }
.wtr { fill: #3f7bc1; }
.city rect { fill: #4c94e8; }
.map .city text { fill: #e1f0ff; font-size: 8px; }
.shield rect { fill: #10b68d; }
.map .shield text { fill: #fff; font-family: "Liberation Sans", sans-serif; font-size: 6.500px; }
.shade { fill: rgb(78, 76, 72); fill-opacity: .5; }
.border { fill: none; stroke: #fff; stroke-width: 1; }
.border g { stroke-width: 3; }
.white { fill: #fff; }
.map .white text { font-size: 7.300px; font-weight: 500; stroke: #fff; stroke-width: .2; }
.tiles { stroke: #5b9be8; stroke-opacity: .22; stroke-width: .6; }

.props { width: 375px; background: #1c1f27; font-size: 15px; }
.tabs { height: 38px; display: grid; grid-template-columns: repeat(3, 1fr); background: #28333c; }
.tabs span { display: grid; place-items: center; padding: 4px 2px 0 0; }
.tabs svg { stroke-width: 1.700; }
.tabs .active { background: #1c1f27; border-top: 3px solid #00baff; padding-top: 1px; }
.tabs .active svg { stroke: #00baff; }
.knob { stroke-width: 3; }
.fill { fill: #bcc9d4; stroke: none; }
.title { height: 76px; border-bottom: 1px solid #29313d; padding: 14px 0 0 12px; }
h1 { margin: 0; font-size: 17.600px; font-weight: 500; line-height: 26px; color: #fff; }
.title p { margin: 0; font-size: 12.300px; line-height: 21px; color: #5f6d73; }
.sec { height: 48px; display: flex; align-items: center; justify-content: space-between; padding: 0 14px 0 22px; font-weight: 500; color: #fff; background: #1b1f27; }
.sec.sub { height: 47px; }
.sec svg { stroke: #00baff; stroke-width: 2.800; margin-top: -2px; }
ul { margin: 0; padding: 0 0 0 25px; list-style: none; background: #15171c; height: 88px; }
li { height: 44px; line-height: 42px; }
li + li { border-top: 1px solid #242c39; line-height: 43px; }
.form { height: 225px; border-top: 1px solid #29313d; border-bottom: 1px solid #29313d; background: #15171c; padding-top: 15px; }
.row { height: 69px; display: grid; grid-template-columns: 99px 106px 107px; column-gap: 9px; padding-left: 36px; }
.row label { line-height: 30px; margin-left: -5px; }
.num { height: 30px; border: 1px solid #29313d; display: grid; grid-template-columns: 1fr 31px; grid-template-rows: 14px 14px; background: #0f1114; }
.num span { grid-row: 1 / 3; font: 15px/29px "Liberation Sans", sans-serif; padding-left: 6px; border-right: 1px solid #29313d; }
.num b { font: 400 14px/14px "Noto Sans", sans-serif; text-align: center; height: 15px; padding-top: 1px; }
.num b + b { border-top: 1px solid #29313d; padding-top: 0; line-height: 12px; }
.field small { display: block; font-size: 15px; line-height: 20px; color: #5d696f; padding-left: 6px; }
.global { height: 50px; display: flex; align-items: center; gap: 8px; padding: 0 0 2px 12px; border-bottom: 1px solid #29313d; }
.global svg { stroke-width: 2.600; margin-top: 3px; }
.status { position: absolute; left: 0; bottom: 0; width: 638px; height: 21px; background: #f1f1f1; border-radius: 0 4px 0 0; color: #5f6368; font: 12px/21px "Noto Sans", sans-serif; padding-left: 3px; }
.note { position: absolute; left: 1735px; top: 130px; }
.note .ln { stroke: #ed1c24; stroke-width: 2; }
.note .hd { fill: #ed1c24; stroke: none; }
```
